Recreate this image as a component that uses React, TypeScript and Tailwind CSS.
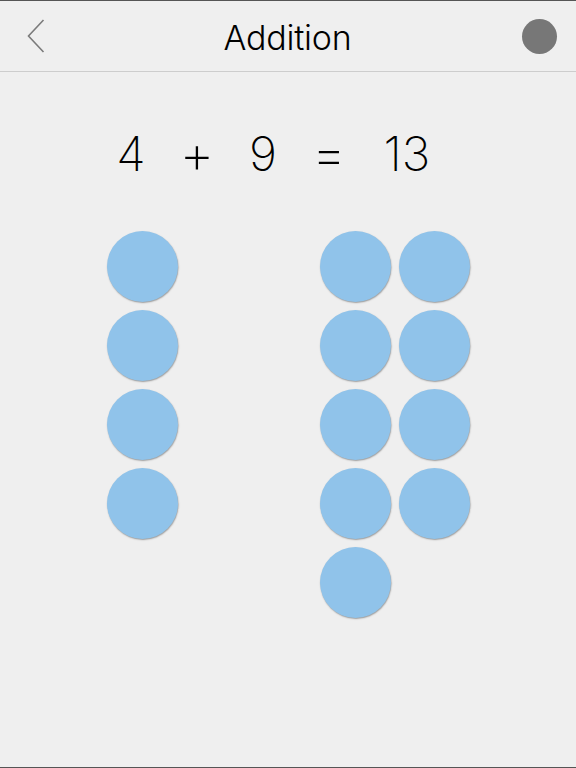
const LEFT = 4
const RIGHT = 9

function Dot() {
  return <div className="h-[71px] w-[71px] rounded-full bg-[#90c3ea] shadow-[0.5px_1px_1.5px_rgba(0,0,0,0.35)]" />
}

export default function App() {
  return (
    <div className="flex h-[768px] w-[576px] flex-col border-y border-[#555] bg-[#efefef] font-['Inter',sans-serif] text-black">
      <header className="grid h-[71px] shrink-0 grid-cols-[1fr_auto_1fr] items-center border-b border-[#cdcdcd] pl-[18px] pr-[19px]">
        <svg viewBox="0 0 18 34" className="ml-[9px] h-[34px] w-[18px]" fill="none">
          <path d="M16.5 1 L1.5 17 L16.5 33" stroke="#7b7b7b" strokeWidth="1.6" />
        </svg>
        <h1 className="pt-[4px] text-[34px] font-light leading-none tracking-[-0.2px]">Addition</h1>
        <div className="h-[35px] w-[35px] justify-self-end rounded-full bg-[#777]" />
      </header>

      <div className="flex items-center pl-[98px] pt-[54px] text-[48px] font-extralight leading-[56px]">
        <span className="w-[66px] text-center">4</span>
        <span className="w-[66px] text-center text-[54px]">+</span>
        <span className="w-[66px] text-center">9</span>
        <span className="w-[66px] text-center text-[54px]">=</span>
        <span className="w-[90px] text-center">13</span>
      </div>

      <div className="flex pl-[107px] pt-[49px]">
        <div className="flex flex-col gap-[8px]">
          {Array.from({ length: LEFT }).map((_, i) => (
            <Dot key={i} />
          ))}
        </div>
        <div className="ml-[142px] grid grid-cols-[71px_71px] gap-[8px]">
          {Array.from({ length: RIGHT }).map((_, i) => (
            <Dot key={i} />
          ))}
        </div>
      </div>
    </div>
  )
}
